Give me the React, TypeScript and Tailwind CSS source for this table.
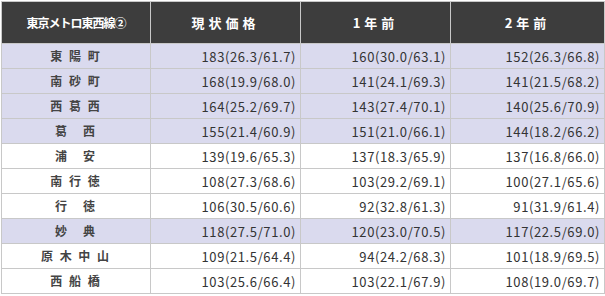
import React from "react";

const rows: { name: string; hl: boolean; v: string[] }[] = [
  { name: "東 陽 町", hl: true, v: ["183(26.3/61.7)", "160(30.0/63.1)", "152(26.3/66.8)"] },
  { name: "南 砂 町", hl: true, v: ["168(19.9/68.0)", "141(24.1/69.3)", "141(21.5/68.2)"] },
  { name: "西 葛 西", hl: true, v: ["164(25.2/69.7)", "143(27.4/70.1)", "140(25.6/70.9)"] },
  { name: "葛　西", hl: true, v: ["155(21.4/60.9)", "151(21.0/66.1)", "144(18.2/66.2)"] },
  { name: "浦　安", hl: false, v: ["139(19.6/65.3)", "137(18.3/65.9)", "137(16.8/66.0)"] },
  { name: "南 行 徳", hl: false, v: ["108(27.3/68.6)", "103(29.2/69.1)", "100(27.1/65.6)"] },
  { name: "行　徳", hl: false, v: ["106(30.5/60.6)", "92(32.8/61.3)", "91(31.9/61.4)"] },
  { name: "妙　典", hl: true, v: ["118(27.5/71.0)", "120(23.0/70.5)", "117(22.5/69.0)"] },
  { name: "原 木 中 山", hl: false, v: ["109(21.5/64.4)", "94(24.2/68.3)", "101(18.9/69.5)"] },
  { name: "西 船 橋", hl: false, v: ["103(25.6/66.4)", "103(22.1/67.9)", "108(19.0/69.7)"] },
];

export default function App() {
  return (
    <div className="w-[605px] h-[296px] bg-white pt-px pl-px" style={{ fontFamily: '"Noto Sans CJK JP", "Noto Sans", sans-serif' }}>
      <table className="border-collapse w-[603px] table-fixed text-[13px] text-[#333]">
        <colgroup>
          <col className="w-[149px]" />
          <col className="w-[150px]" />
          <col className="w-[150px]" />
          <col className="w-[154px]" />
        </colgroup>
        <thead>
          <tr className="h-[42px] bg-[#3d3d3d] text-white">
            <th className="border border-[#c8c8c8] p-0 text-[12px] font-bold tracking-[-1px] text-center">東京メトロ東西線②</th>
            <th className="border border-[#c8c8c8] p-0 text-[13px] font-bold tracking-[4px] text-center">現状価格</th>
            <th className="border border-[#c8c8c8] p-0 text-[13px] font-bold tracking-[4px] text-center">1年前</th>
            <th className="border border-[#c8c8c8] p-0 text-[13px] font-bold tracking-[4px] text-center">2年前</th>
          </tr>
        </thead>
        <tbody>
          {rows.map((r) => (
            <tr key={r.name} className={"h-[25px] " + (r.hl ? "bg-[#dadaee]" : "bg-white")}>
              <td className="border border-[#c8c8c8] p-0 text-center text-[12px] font-semibold text-[#444] tracking-[2px] leading-none">{r.name}</td>
              {r.v.map((x, i) => (
                <td key={i} className="border border-[#c8c8c8] p-0 pr-[4px] text-right tracking-[0.6px] leading-none">{x}</td>
              ))}
            </tr>
          ))}
        </tbody>
      </table>
    </div>
  );
}
